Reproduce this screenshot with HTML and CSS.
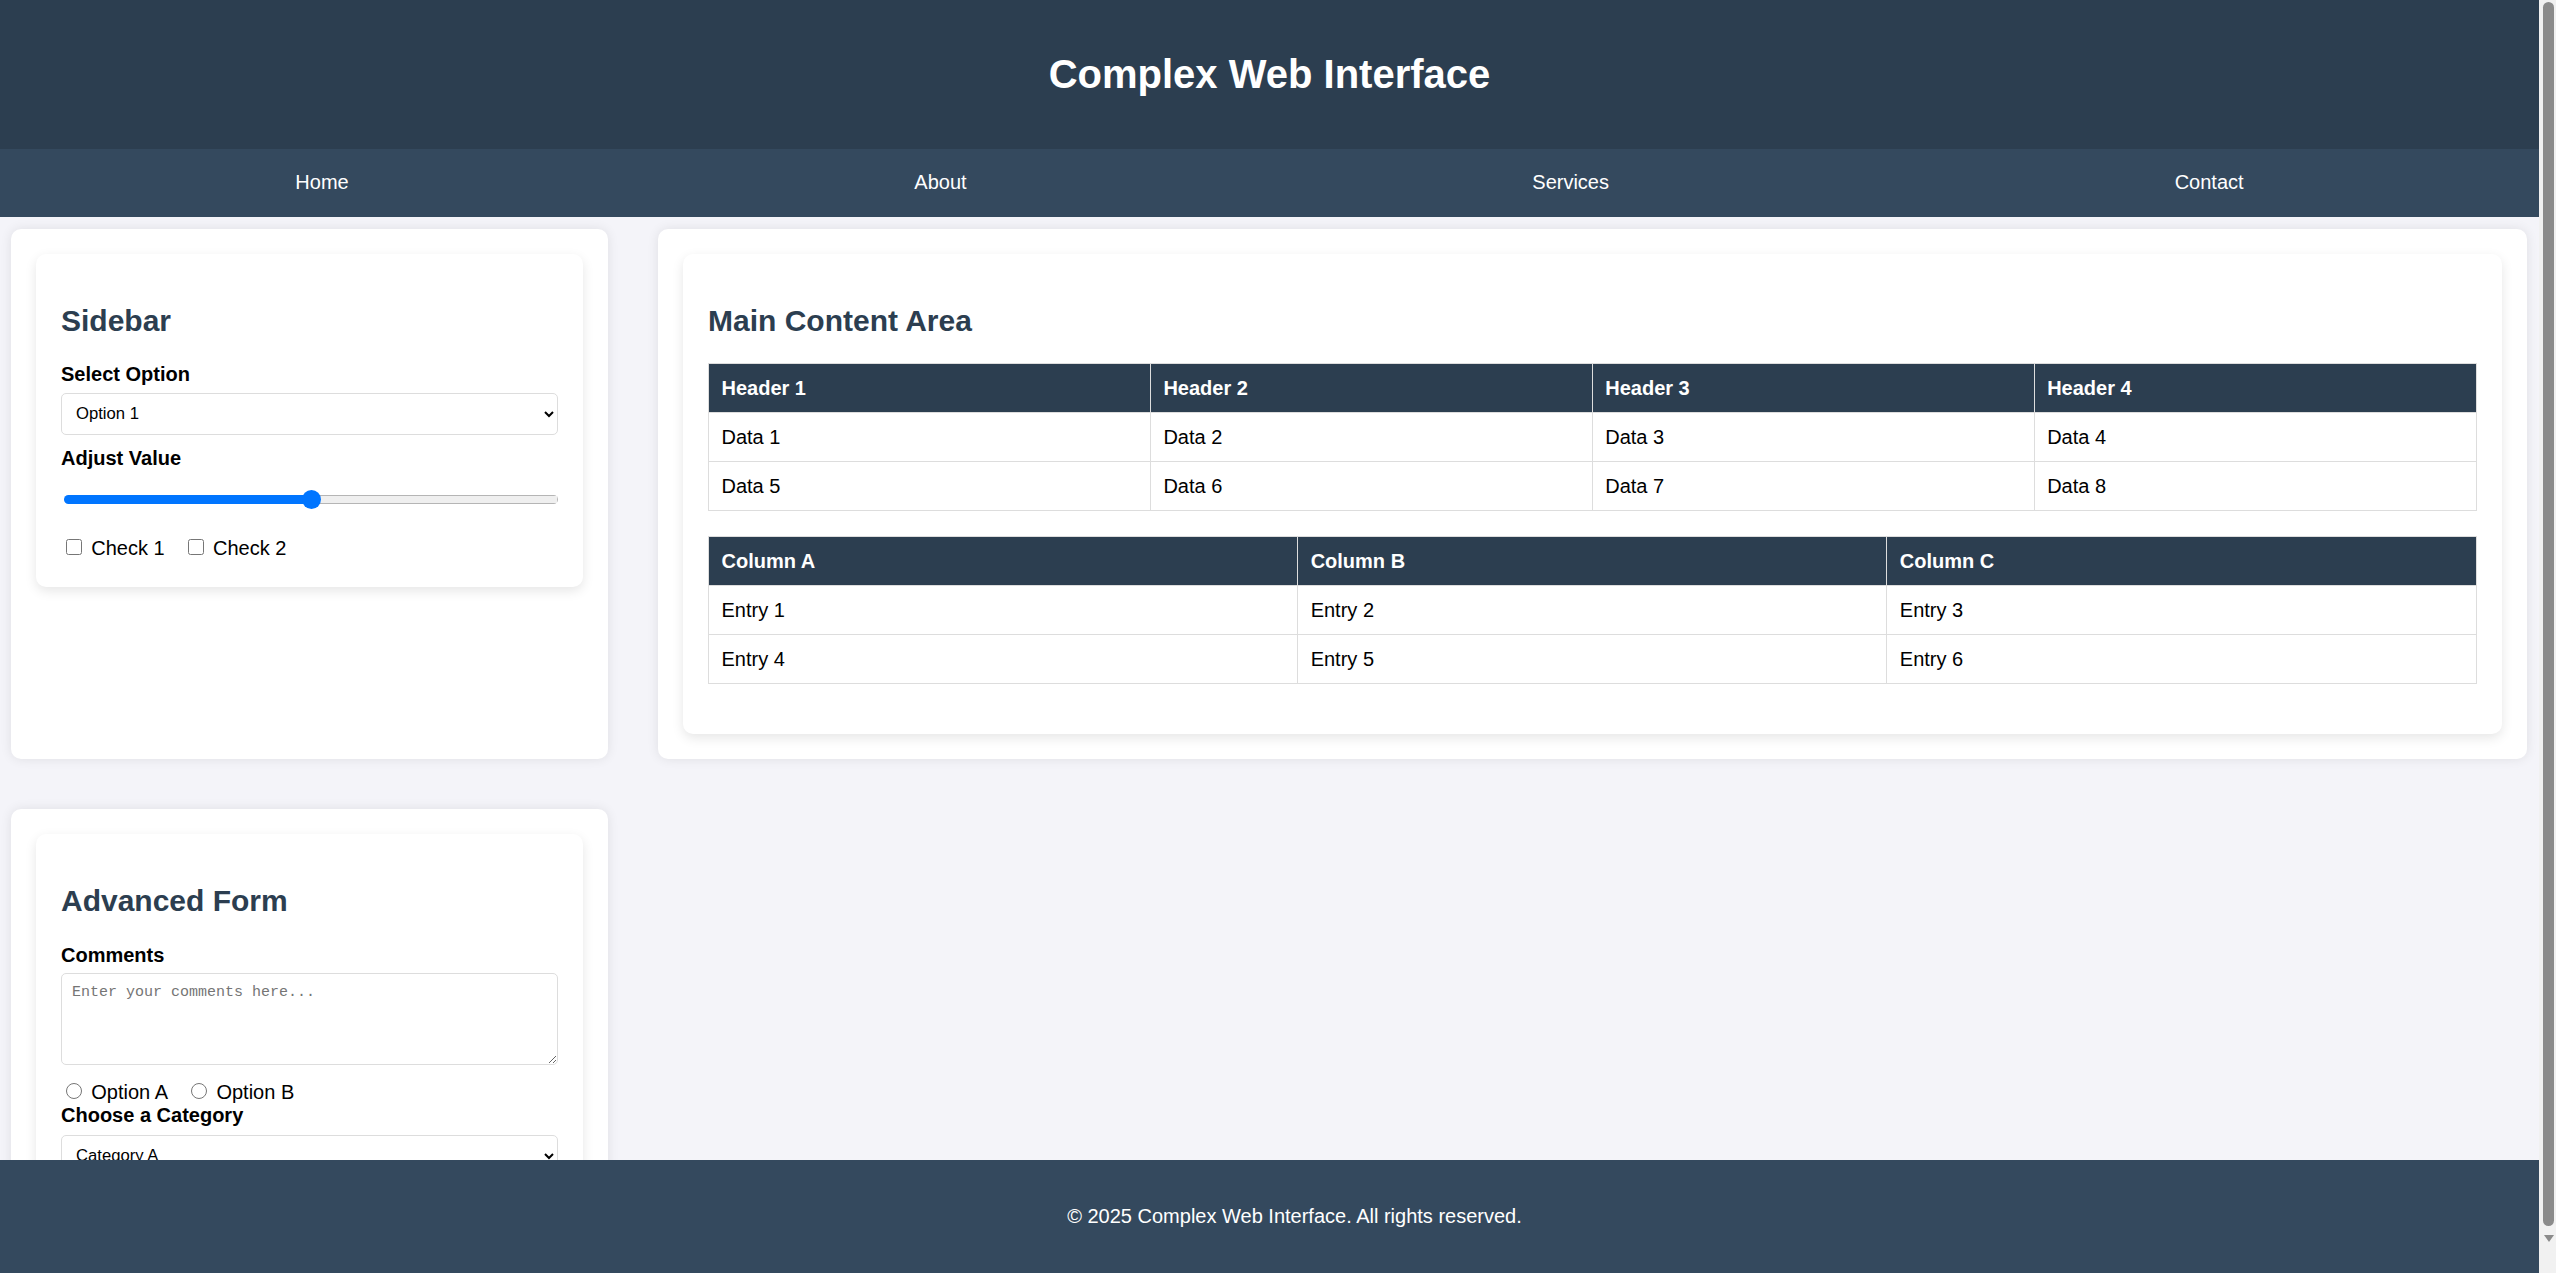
FILE: index.html
```html
<!DOCTYPE html>
<html lang="en">
<head>
<meta charset="UTF-8">
<title>Complex Web Interface</title>
<link rel="stylesheet" href="styles.css">
</head>
<body>
<header class="site-header">
  <h1 class="site-title">Complex Web Interface</h1>
</header>
<nav class="site-nav">
  <a class="nav-link" href="#">Home</a>
  <a class="nav-link" href="#">About</a>
  <a class="nav-link" href="#">Services</a>
  <a class="nav-link" href="#">Contact</a>
</nav>
<main class="layout">
  <aside class="panel">
    <div class="card">
      <h2 class="card-title">Sidebar</h2>
      <label class="field-label" for="opt">Select Option</label>
      <select id="opt" class="select">
        <option>Option 1</option>
        <option>Option 2</option>
        <option>Option 3</option>
      </select>
      <label class="field-label" for="val">Adjust Value</label>
      <input id="val" class="range" type="range" min="0" max="100" value="50">
      <div class="choice-row">
        <label class="choice"><input type="checkbox" class="tick"> Check 1</label>
        <label class="choice"><input type="checkbox" class="tick"> Check 2</label>
      </div>
    </div>
  </aside>
  <section class="panel">
    <div class="card">
      <h2 class="card-title">Main Content Area</h2>
      <table class="data-table">
        <thead>
          <tr><th>Header 1</th><th>Header 2</th><th>Header 3</th><th>Header 4</th></tr>
        </thead>
        <tbody>
          <tr><td>Data 1</td><td>Data 2</td><td>Data 3</td><td>Data 4</td></tr>
          <tr><td>Data 5</td><td>Data 6</td><td>Data 7</td><td>Data 8</td></tr>
        </tbody>
      </table>
      <table class="data-table">
        <thead>
          <tr><th>Column A</th><th>Column B</th><th>Column C</th></tr>
        </thead>
        <tbody>
          <tr><td>Entry 1</td><td>Entry 2</td><td>Entry 3</td></tr>
          <tr><td>Entry 4</td><td>Entry 5</td><td>Entry 6</td></tr>
        </tbody>
      </table>
    </div>
  </section>
  <aside class="panel">
    <div class="card">
      <h2 class="card-title">Advanced Form</h2>
      <label class="field-label" for="comments">Comments</label>
      <textarea id="comments" class="textarea" placeholder="Enter your comments here..."></textarea>
      <div class="radio-row">
        <label class="choice"><input type="radio" name="opt" class="tick"> Option A</label>
        <label class="choice"><input type="radio" name="opt" class="tick"> Option B</label>
      </div>
      <label class="field-label field-label-cat" for="cat">Choose a Category</label>
      <select id="cat" class="select">
        <option>Category A</option>
        <option>Category B</option>
        <option>Category C</option>
      </select>
      <button class="submit-btn" type="button">Submit</button>
    </div>
  </aside>
</main>
<footer class="site-footer">
  <p class="footer-text">© 2025 Complex Web Interface. All rights reserved.</p>
</footer>
<div class="scrollbar" aria-hidden="true">
  <div class="scrollbar-thumb"></div>
  <div class="scrollbar-arrow"></div>
</div>
</body>
</html>
```

FILE: styles.css
```css
body {
  margin: 0 17px 0 0;
  font-family: "Liberation Sans", Arial, sans-serif;
  font-size: 20px;
  line-height: 23px;
  background: #f4f4f9;
  color: #000;
}

.site-header {
  background: #2c3e50;
  color: #fff;
  padding: 24.5px;
  text-align: center;
}

.site-title {
  margin: 26.8px 0;
  font-size: 40px;
  line-height: 46px;
  font-weight: bold;
}

.site-nav {
  background: #34495e;
  display: flex;
  justify-content: space-around;
  padding: 12.5px;
}

.nav-link {
  color: #fff;
  text-decoration: none;
  padding: 10px 0;
  line-height: 23px;
}

.layout {
  display: grid;
  grid-template-columns: 597px 1fr;
  gap: 50px;
  padding: 12.5px 12.5px 12.5px 11px;
  align-items: stretch;
}

.panel {
  background: #fff;
  border-radius: 10px;
  padding: 25px;
  box-shadow: 0 0 12px rgba(0, 0, 0, 0.09);
}

.card {
  background: #fff;
  border-radius: 10px;
  padding: 25px;
  box-shadow: 0 4px 12px rgba(0, 0, 0, 0.1);
}

.card-title {
  font-size: 30px;
  line-height: 34.5px;
  margin: 24.9px 0;
  color: #2c3e50;
}

.field-label {
  display: block;
  font-weight: bold;
  margin-bottom: 6.25px;
}

.field-label-cat {
  margin-bottom: 8px;
}

.select {
  display: block;
  box-sizing: border-box;
  width: 100%;
  height: 42px;
  padding: 0 10px;
  margin: 0 0 12.5px 0;
  font-family: "Liberation Sans", Arial, sans-serif;
  font-size: 16.67px;
  color: #000;
  background: #fff;
  border: 1px solid #ddd;
  border-radius: 5px;
}

.range {
  display: block;
  -webkit-appearance: none;
  appearance: none;
  width: calc(100% - 3px);
  height: 20px;
  margin: 19.5px 0 0 3px;
  padding: 0;
  background: transparent;
}

.range::-webkit-slider-runnable-track {
  box-sizing: border-box;
  height: 9px;
  border-radius: 5px;
  border: none;
  background:
    linear-gradient(#0075ff, #0075ff) left center / 50% 100% no-repeat,
    linear-gradient(#efefef, #efefef) center / calc(100% - 2px) calc(100% - 2px) no-repeat,
    #b5b5b5;
}

.range::-webkit-slider-thumb {
  -webkit-appearance: none;
  appearance: none;
  width: 19px;
  height: 19px;
  margin-top: -5px;
  border-radius: 50%;
  background: #0075ff;
  border: none;
}

.choice-row {
  margin-top: 26px;
  padding-bottom: 2px;
}

.choice {
  margin-right: 12.5px;
}

.tick {
  width: 16px;
  height: 16px;
  margin: 3.75px 3.75px 0 5px;
  vertical-align: baseline;
}

.textarea {
  display: block;
  box-sizing: border-box;
  width: 100%;
  height: 92px;
  padding: 10px;
  margin: 0 0 14px 0;
  font-family: "Liberation Mono", monospace;
  font-size: 15px;
  line-height: 17px;
  border: 1px solid #ddd;
  border-radius: 5px;
}

.textarea::placeholder {
  color: #757575;
}

.radio-row {
  margin: 0;
}

.submit-btn {
  padding: 12.5px 25px;
  font-family: "Liberation Sans", Arial, sans-serif;
  font-size: 20px;
  color: #fff;
  background: #2c3e50;
  border: none;
  border-radius: 5px;
}

.data-table {
  width: 100%;
  border-collapse: collapse;
  table-layout: fixed;
  margin-bottom: 25px;
}

.data-table th,
.data-table td {
  padding: 12.5px;
  border: 1px solid #ddd;
  text-align: left;
  line-height: 23px;
}

.data-table th {
  background: #2c3e50;
  color: #fff;
  font-weight: bold;
}

.site-footer {
  position: fixed;
  left: 0;
  bottom: 0;
  width: calc(100% - 17px);
  padding: 25px;
  background: #34495e;
  color: #fff;
  text-align: center;
}

.footer-text {
  margin: 20px 0;
}

.scrollbar {
  position: fixed;
  top: 0;
  right: 0;
  z-index: 10;
  box-sizing: border-box;
  width: 17px;
  height: 100%;
  padding: 2px 2px 0 4px;
  background: #f1f1f1;
  display: flex;
  flex-direction: column;
  align-items: center;
}

.scrollbar-thumb {
  align-self: stretch;
  height: 1224px;
  border-radius: 6px;
  background: #8b8b8b;
}

.scrollbar-arrow {
  width: 0;
  height: 0;
  margin-top: 9px;
  border-left: 5px solid transparent;
  border-right: 5px solid transparent;
  border-top: 7px solid #8b8b8b;
}
```
